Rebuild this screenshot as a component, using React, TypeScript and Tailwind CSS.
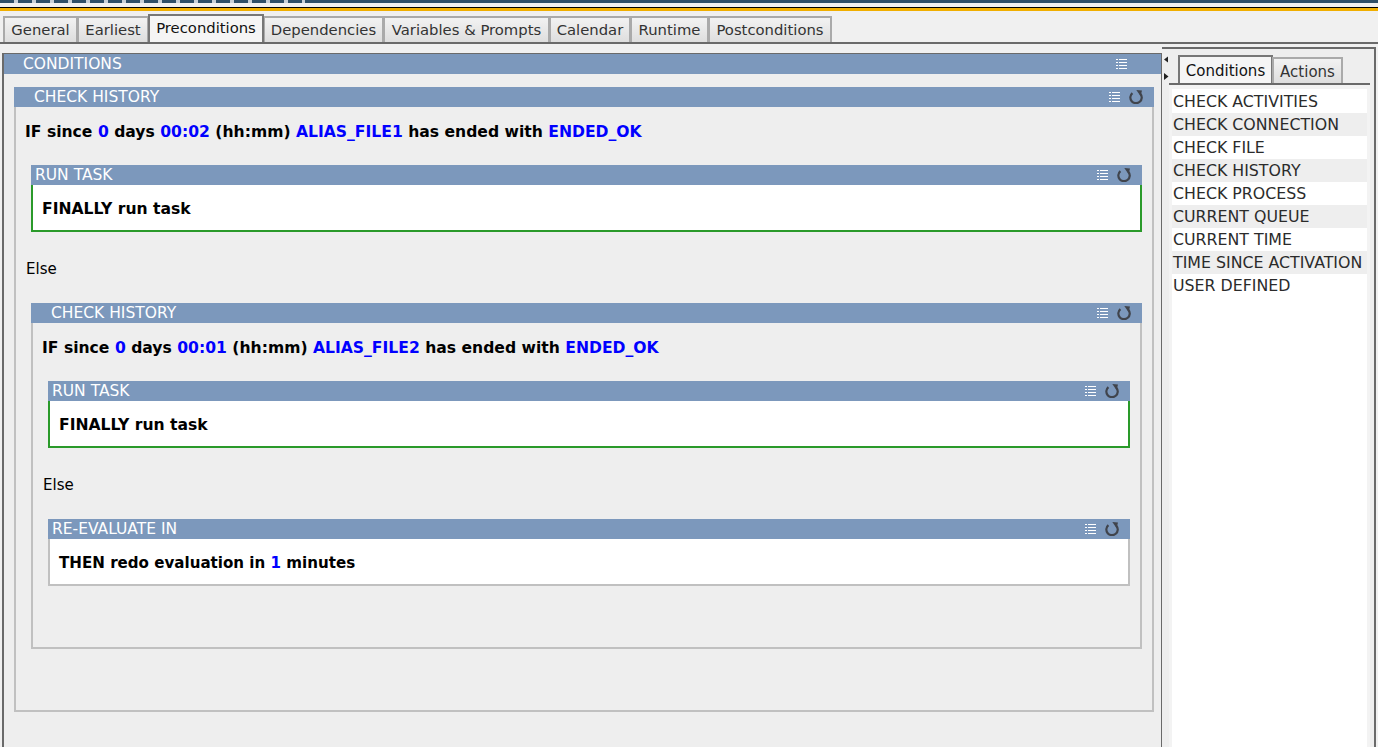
import React from "react";

const font = { fontFamily: '"DejaVu Sans", sans-serif' };

function ListIcon() {
  return (
    <svg width="11" height="11" viewBox="0 0 11 11" className="shrink-0">
      {[1, 4, 7, 10].map((y) => (
        <g key={y} fill="#fff">
          <rect x="0" y={y - 1} width="2" height="1" />
          <rect x="3" y={y - 1} width="8" height="1" />
        </g>
      ))}
    </svg>
  );
}

function RefreshIcon() {
  return (
    <svg width="14" height="14" viewBox="0 0 14 14" className="shrink-0" fill="none">
      <path d="M3.4 3.1 A5.7 5.7 0 1 0 11.3 3.7" stroke="#40444c" strokeWidth="2.2" />
      <path d="M7.3 0 L13 0.4 L11.6 6.2 Z" fill="#40444c" />
    </svg>
  );
}

function Header({ title, indent, noRefresh }: { title: string; indent: string; noRefresh?: boolean }) {
  return (
    <div className={`h-5 shrink-0 bg-[#7c98bc] flex items-center text-white text-[15.5px] leading-none ${indent}`}>
      <span className="flex-1 pt-[2px]">{title}</span>
      {noRefresh ? (
        <span className="mr-[34px]"><ListIcon /></span>
      ) : (
        <span className="flex items-center gap-[9px] mr-[11px]">
          <ListIcon />
          <RefreshIcon />
        </span>
      )}
    </div>
  );
}

function B({ children }: { children: React.ReactNode }) {
  return <span className="text-[#0000ff]">{children}</span>;
}

function Line({ children, cls }: { children: React.ReactNode; cls: string }) {
  return <div className={`font-bold text-[15.6px] leading-5 text-black ${cls}`}>{children}</div>;
}

function TaskBox({ title, text, border, cls }: { title: string; text: React.ReactNode; border: string; cls: string }) {
  return (
    <div className={`flex flex-col ${cls}`}>
      <Header title={title} indent="pl-[4px]" />
      <div className={`h-[47px] bg-white border-2 border-t-0 ${border} flex items-center pl-[9px] pt-[3px]`}>
        <Line cls="">{text}</Line>
      </div>
    </div>
  );
}

const tabs = ["General", "Earliest", "Preconditions", "Dependencies", "Variables & Prompts", "Calendar", "Runtime", "Postconditions"];
const widths = ["w-[75px]", "w-[72px]", "w-[116px]", "w-[121px]", "w-[167px]", "w-[82px]", "w-[79px]", "w-[124px]"];
const items = ["CHECK ACTIVITIES", "CHECK CONNECTION", "CHECK FILE", "CHECK HISTORY", "CHECK PROCESS", "CURRENT QUEUE", "CURRENT TIME", "TIME SINCE ACTIVATION", "USER DEFINED"];

export default function App() {
  return (
    <div style={font} className="h-[747px] w-[1378px] overflow-hidden bg-[#f0f0f0] flex flex-col">
      <div className="h-[3px] bg-[#2f4f68] shrink-0">
        <div className="h-full w-[305px] bg-[repeating-linear-gradient(90deg,#2f4f68_0,#2f4f68_14px,#c8d0d8_14px,#c8d0d8_18px)]" />
      </div>
      <div className="h-[4px] bg-[#f0f0f0] shrink-0" />
      <div className="h-px bg-black shrink-0" />
      <div className="h-[3px] bg-[#f0ae00] shrink-0" />

      <div className="h-[33px] shrink-0 border-b-2 border-[#6a6a6a] flex items-end pl-[3px]">
        {tabs.map((t, i) => {
          const active = i === 2;
          return (
            <div
              key={t}
              className={`${widths[i]} -ml-px first:ml-0 flex justify-center border-2 border-b-0 ${
                active
                  ? "h-[28px] border-[#777] bg-[#f5f5f5] text-[#111] items-start pt-[2px] relative z-10"
                  : "h-[26px] border-[#aaa] bg-gradient-to-b from-[#f2f2f2] to-[#dedede] text-[#333] items-start pt-[2px]"
              } text-[14.8px] leading-5`}
            >
              {t}
            </div>
          );
        })}
      </div>

      <div className="flex-1 min-h-0 flex">
        <div className="w-[1163px] shrink-0 pl-[2px] pt-[9px] flex flex-col">
          <div className="flex-1 min-h-0 border-l-2 border-r-2 border-t border-[#6a6a6a] bg-[#eeeeee] flex flex-col">
            <Header title="CONDITIONS" indent="pl-[19px]" noRefresh />
            <div className="mt-[13px] ml-[10px] mr-[7px] h-[625px] flex flex-col">
              <Header title="CHECK HISTORY" indent="pl-[20px]" />
              <div className="flex-1 border-2 border-t-0 border-[#c0c0c0] flex flex-col">
                <Line cls="mt-[15px] ml-[9px]">
                  IF since <B>0</B> days <B>00:02</B> (hh:mm) <B>ALIAS_FILE1</B> has ended with <B>ENDED_OK</B>
                </Line>
                <TaskBox title="RUN TASK" text="FINALLY run task" border="border-[#2a9a2a]" cls="mt-[23px] ml-[15px] mr-[10px]" />
                <div className="mt-[27px] ml-[10px] text-[15px] leading-5 text-black">Else</div>
                <div className="mt-[24px] ml-[15px] mr-[10px] h-[346px] flex flex-col">
                  <Header title="CHECK HISTORY" indent="pl-[20px]" />
                  <div className="flex-1 border-2 border-t-0 border-[#c0c0c0] flex flex-col">
                    <Line cls="mt-[15px] ml-[9px]">
                      IF since <B>0</B> days <B>00:01</B> (hh:mm) <B>ALIAS_FILE2</B> has ended with <B>ENDED_OK</B>
                    </Line>
                    <TaskBox title="RUN TASK" text="FINALLY run task" border="border-[#2a9a2a]" cls="mt-[23px] ml-[15px] mr-[10px]" />
                    <div className="mt-[27px] ml-[10px] text-[15px] leading-5 text-black">Else</div>
                    <TaskBox
                      title="RE-EVALUATE IN"
                      text={<span className="text-[15.1px]">THEN redo evaluation in <B>1</B> minutes</span>}
                      border="border-[#c0c0c0]"
                      cls="mt-[24px] ml-[15px] mr-[10px]"
                    />
                  </div>
                </div>
              </div>
            </div>
          </div>
        </div>

        <div className="flex-1 min-w-0 relative">
          <svg width="7" height="26" viewBox="0 0 7 26" className="absolute left-0 top-[12px]">
            <path d="M1 3.5 L5 0.5 V6.5 Z" fill="#222" />
            <path d="M1 17 V24 L5.5 20.5 Z" fill="#222" />
          </svg>
          <div className="mt-[3px] ml-[-1px] w-[214px] h-[800px] border-t-2 border-r-2 border-[#6a6a6a] bg-[#eeeeee] flex flex-col">
            <div className="mt-[8px] ml-[7px] mr-[4px] h-[28px] border-b-2 border-[#6a6a6a] flex items-end pl-[9px] shrink-0">
              <div className="w-[95px] h-[28px] border-2 border-b-0 border-[#777] bg-[#f5f5f5] text-[#111] text-[15px] leading-5 flex justify-center pt-[4px]">
                Conditions
              </div>
              <div className="w-[71px] h-[26px] -ml-px border-2 border-b-0 border-[#aaa] bg-gradient-to-b from-[#f2f2f2] to-[#dedede] text-[#333] text-[15px] leading-5 flex justify-center items-center pt-px">
                Actions
              </div>
            </div>
            <div className="flex-1 ml-[7px] mr-[4px] bg-[#f3f3f3] px-[3px] pt-[4px]">
              <div className="h-full bg-white pt-px">
                {items.map((t, i) => (
                  <div
                    key={t}
                    className={`h-[23px] pl-[1px] whitespace-nowrap text-[15.8px] leading-[24px] text-[#2b2b2b] ${i % 2 ? "bg-[#eeeeee]" : "bg-white"}`}
                  >
                    {t}
                  </div>
                ))}
              </div>
            </div>
          </div>
        </div>
      </div>
    </div>
  );
}
